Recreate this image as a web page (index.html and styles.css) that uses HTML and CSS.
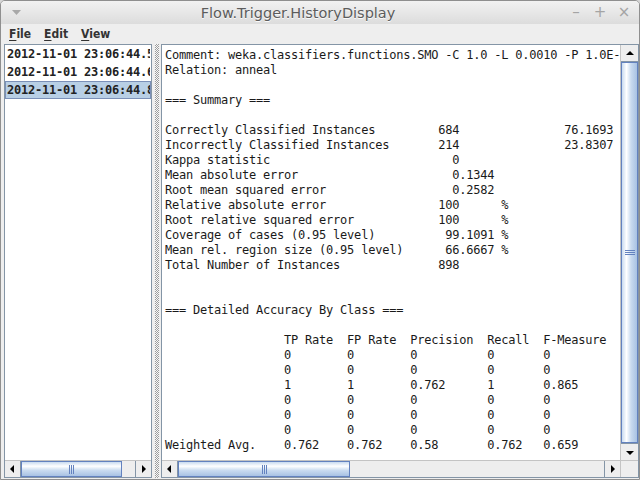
FILE: index.html
```html
<!DOCTYPE html>
<html>
<head>
<meta charset="utf-8">
<title>Flow.Trigger.HistoryDisplay</title>
<link rel="stylesheet" href="styles.css">
</head>
<body>
<div class="window">
  <div class="titlebar">
    <svg class="wm-menu" width="9" height="6" viewBox="0 0 9 6"><path d="M0 0H9L4.5 5Z" fill="#a8a8a8"/></svg>
    <div class="title">Flow.Trigger.HistoryDisplay</div>
    <div class="wm-buttons"><span class="wm-btn">–</span><span class="wm-btn">+</span><span class="wm-btn">×</span></div>
  </div>
  <div class="menubar">
    <span class="menu"><u>F</u>ile</span>
    <span class="menu"><u>E</u>dit</span>
    <span class="menu"><u>V</u>iew</span>
  </div>
  <div class="content">
    <div class="pane left-pane">
      <div class="list">
        <div class="item">2012-11-01 23:06:44.562</div>
        <div class="item">2012-11-01 23:06:44.687</div>
        <div class="item selected">2012-11-01 23:06:44.812</div>
      </div>
      <div class="hscroll">
        <div class="sbtn sbtn-l"><svg width="5" height="8" viewBox="0 0 5 8"><path d="M4 0V8L0 4Z" fill="#000"/></svg></div>
        <div class="track"><div class="thumb hthumb" style="width:101px"><span class="grip vgrip"></span></div></div>
        <div class="sbtn sbtn-r"><svg width="5" height="8" viewBox="0 0 5 8"><path d="M1 0V8L5 4Z" fill="#000"/></svg></div>
      </div>
    </div>
    <div class="divider"></div>
    <div class="pane right-pane">
      <div class="view-row">
<pre class="output">Comment: weka.classifiers.functions.SMO -C 1.0 -L 0.0010 -P 1.0E-12 -N 0 -V -1 -W 1 -K "weka.classifiers.functions.supportVector.PolyKernel -C 250007 -E 1.0"
Relation: anneal

=== Summary ===

Correctly Classified Instances         684               76.1693 %
Incorrectly Classified Instances       214               23.8307 %
Kappa statistic                          0     
Mean absolute error                      0.1344
Root mean squared error                  0.2582
Relative absolute error                100      %
Root relative squared error            100      %
Coverage of cases (0.95 level)          99.1091 %
Mean rel. region size (0.95 level)      66.6667 %
Total Number of Instances              898     


=== Detailed Accuracy By Class ===

                 TP Rate  FP Rate  Precision  Recall  F-Measure  ROC Area  Class
                 0        0        0          0       0          0.5       1
                 0        0        0          0       0          0.5       2
                 1        1        0.762      1       0.865      0.5       3
                 0        0        0          0       0          0.5       4
                 0        0        0          0       0          0.5       5
                 0        0        0          0       0          0.5       U
Weighted Avg.    0.762    0.762    0.58       0.762   0.659      0.5
</pre>
        <div class="vscroll">
          <div class="sbtn sbtn-u"><svg width="8" height="5" viewBox="0 0 8 5"><path d="M0 4H8L4 0Z" fill="#000"/></svg></div>
          <div class="vtrack"><div class="vthumb"><span class="grip hgrip"></span></div></div>
          <div class="sbtn sbtn-d"><svg width="8" height="5" viewBox="0 0 8 5"><path d="M0 1H8L4 5Z" fill="#000"/></svg></div>
        </div>
      </div>
      <div class="bottom-row">
        <div class="hscroll wide">
          <div class="sbtn sbtn-l"><svg width="5" height="8" viewBox="0 0 5 8"><path d="M4 0V8L0 4Z" fill="#000"/></svg></div>
          <div class="track"><div class="thumb hthumb" style="width:172px"><span class="grip vgrip"></span></div></div>
          <div class="sbtn sbtn-r"><svg width="5" height="8" viewBox="0 0 5 8"><path d="M1 0V8L5 4Z" fill="#000"/></svg></div>
        </div>
        <div class="corner"></div>
      </div>
    </div>
  </div>
</div>
</body>
</html>
```

FILE: styles.css
```css
* { box-sizing: border-box; }
html, body { margin: 0; padding: 0; background: #d6d6d6; overflow: hidden; }
.window {
  width: 640px; height: 480px;
  border: 1px solid #8f8f8f;
  border-radius: 5px 5px 0 0;
  background: #eeeeee;
  display: flex; flex-direction: column;
  overflow: hidden;
}
.titlebar {
  height: 23px; flex: none;
  display: flex; align-items: center;
  background: linear-gradient(#f2f2f2, #dcdcdc);
  font-family: "DejaVu Sans", sans-serif; font-size: 14.5px; color: #5c5c5c;
  position: relative;
}
.wm-menu { margin-left: 11px; flex: none; }
.title { flex: 1; min-width: 0; text-align: center; padding-right: 64px; white-space: nowrap; text-shadow: 0 1px 0 #fafafa; }
.wm-buttons { position: absolute; right: 8px; top: 2px; display: flex; gap: 10px; }
.wm-btn { width: 14px; text-align: center; color: #a4a4a4; font-size: 15px; line-height: 19px; }

.menubar {
  height: 19px; flex: none;
  display: flex; align-items: center; gap: 13px;
  padding-left: 8px;
  font-family: "DejaVu Sans Condensed", "DejaVu Sans", sans-serif; font-weight: bold; font-size: 12px; color: #333;
  background: #eeeeee;
}
.menu u { text-decoration-thickness: 1px; text-underline-offset: 2px; }

.content {
  height: 436px; flex: none; display: flex;
  padding: 1px 0 1px 3px;
  background: #eeeeee;
}
.pane { border: 1px solid #8495a6; background: #fff; display: flex; flex-direction: column; }
.left-pane { width: 148px; flex: none; }
.right-pane { width: 478px; flex: none; }
.divider { width: 9px; flex: none; background: #eeeeee; position: relative; }
.divider::after {
  content: ""; position: absolute; left: 3px; top: 0; bottom: 0; width: 4px;
  background: repeating-conic-gradient(#9c9c9c 0 25%, #f8f8f8 0 50%);
  background-size: 2px 2px;
}

.list { flex: 1; overflow: hidden; }
.item {
  height: 18px; line-height: 16px; padding-left: 1px;
  font-family: "DejaVu Sans Mono", monospace; font-weight: bold; font-size: 12px; letter-spacing: -0.22px;
  color: #222; white-space: nowrap; overflow: hidden;
  border: 1px solid transparent;
}
.item.selected { background: #b8cfe5; border-color: #7b90b8; }

.view-row { height: 415px; flex: none; display: flex; }
.output {
  width: 458px; flex: none; height: 415px; margin: 0; padding: 3px 0 0 3px; overflow: hidden;
  font-family: "DejaVu Sans Mono", monospace; font-size: 12px; letter-spacing: -0.22px;
  line-height: 15px; color: #1a1a1a; white-space: pre;
}
.vscroll {
  width: 18px; height: 415px; flex: none;
  display: flex; flex-direction: column;
  background: #eeeeee; border-left: 1px solid #c4c4c4;
}
.sbtn {
  flex: none;
  display: flex; align-items: center; justify-content: center;
  background: #eeeeee; border: 0 solid #8495a6;
}
.sbtn-u { height: 17px; border-bottom-width: 1px; }
.sbtn-d { height: 17px; border-top-width: 1px; }
.vtrack { flex: 1; display: flex; padding: 0; }
.vthumb {
  flex: 1; border: 1px solid #6382bf;
  display: flex; align-items: center; justify-content: center;
  background: linear-gradient(to right, #c9dbf0 0, #ffffff 30%, #c9dbf0 60%, #a8c2e3 100%);
}

.bottom-row { height: 17px; flex: none; display: flex; border-top: 1px solid #c4c4c4; }
.hscroll { height: 16px; flex: none; display: flex; background: #eeeeee; }
.left-pane .hscroll { border-top: 1px solid #c4c4c4; height: 17px; }
.hscroll.wide { width: 458px; height: 16px; }
.sbtn-l { width: 16px; border-right-width: 1px; }
.sbtn-r { width: 16px; border-left-width: 1px; }
.track { flex: 1; display: flex; }
.thumb { border: 1px solid #6382bf; display: flex; align-items: center; justify-content: center; }
.hthumb { flex: none; background: linear-gradient(#c9dbf0 0, #ffffff 30%, #c9dbf0 60%, #a8c2e3 100%); }
.grip { display: block; }
.vgrip { width: 5px; height: 9px; background: repeating-linear-gradient(to right, #6382bf 0 1px, transparent 1px 2px); }
.hgrip { width: 10px; height: 5px; background: repeating-linear-gradient(#6382bf 0 1px, transparent 1px 2px); }
.corner { flex: 1; background: #eeeeee; border-left: 1px solid #c4c4c4; }
```
